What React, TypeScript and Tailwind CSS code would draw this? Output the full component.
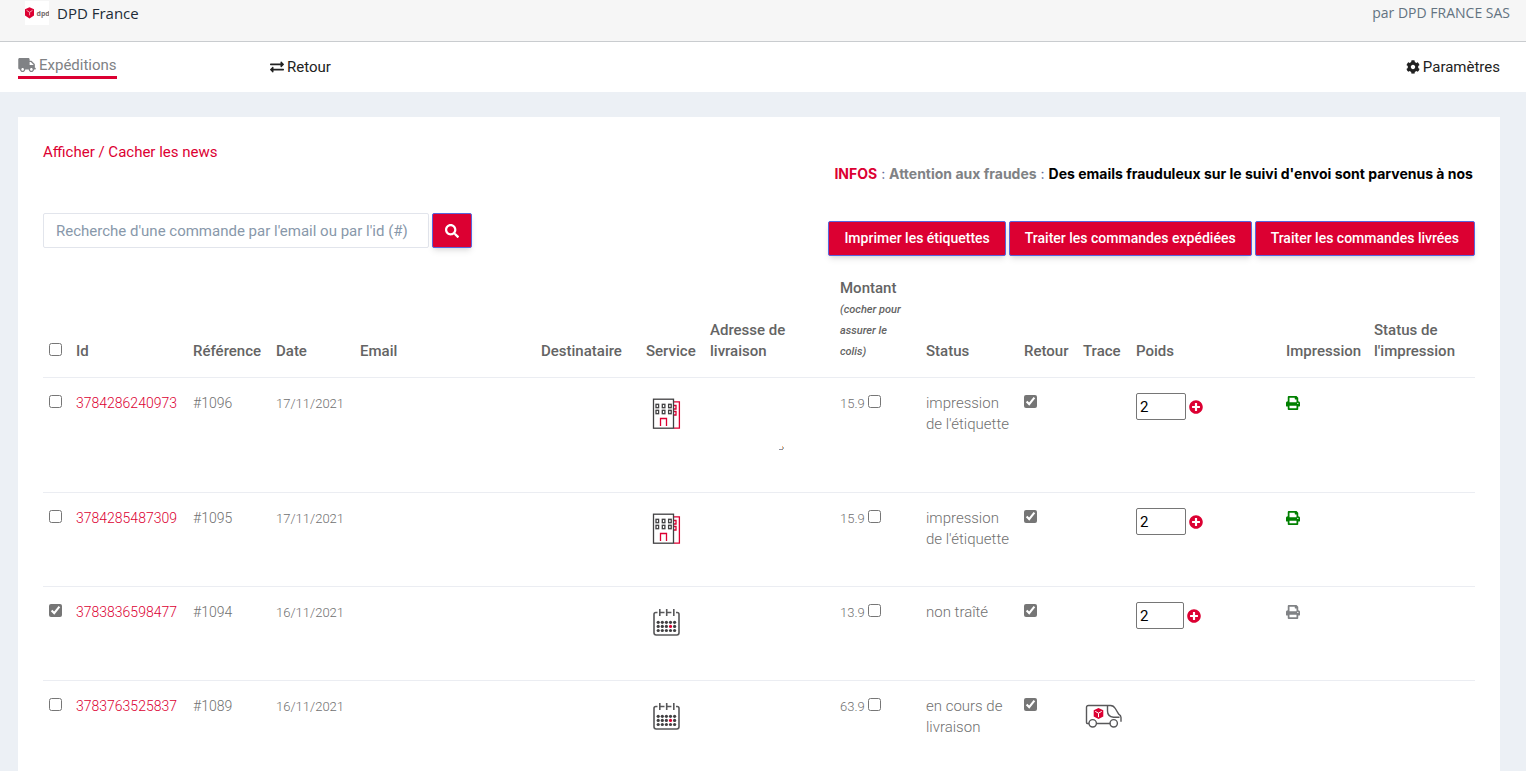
import React from "react";
import { FaCog, FaExchangeAlt, FaPlusCircle, FaPrint, FaSearch, FaTruck } from "react-icons/fa";

type Order = {
  id: string;
  reference: string;
  date: string;
  service: "relais" | "predict";
  amount: string;
  status: string;
  checked: boolean;
  trace: boolean;
  weight: string;
  print: "done" | "todo" | "none";
  height: string;
};

const orders: Order[] = [
  { id: "3784286240973", reference: "#1096", date: "17/11/2021", service: "relais", amount: "15.9", status: "impression de l'étiquette", checked: false, trace: false, weight: "2", print: "done", height: "h-[115px]" },
  { id: "3784285487309", reference: "#1095", date: "17/11/2021", service: "relais", amount: "15.9", status: "impression de l'étiquette", checked: false, trace: false, weight: "2", print: "done", height: "h-[94px]" },
  { id: "3783836598477", reference: "#1094", date: "16/11/2021", service: "predict", amount: "13.9", status: "non traîté", checked: true, trace: false, weight: "2", print: "todo", height: "h-[94px]" },
  { id: "3783763525837", reference: "#1089", date: "16/11/2021", service: "predict", amount: "63.9", status: "en cours de livraison", checked: false, trace: true, weight: "", print: "none", height: "h-[94px]" },
];

const actions = ["Imprimer les étiquettes", "Traiter les commandes expédiées", "Traiter les commandes livrées"];

const DpdLogo = () => (
  <svg width="24" height="24" viewBox="0 0 24 24" className="bg-white">
    <path d="M4.5 6.2 9 8.2v6.4l-4.5 2.8L0 14.6V8.2z" fill="#dc0032" />
    <path d="M1.5 9.3 4.6 11.3 7.5 9.3M4.6 11.3v3" fill="none" stroke="#f5b3c1" strokeWidth="0.9" />
    <text x="11.5" y="14.5" fontSize="7" fontWeight="bold" fill="#77706f" fontFamily="Open Sans, sans-serif">dpd</text>
  </svg>
);

const BuildingIcon = () => (
  <svg width="30" height="32" viewBox="0 0 30 32" fill="none" strokeWidth="1.3">
    <path d="M22 3.8h5.4v26.4H22M22 7.5h2v3.5h-2M22 13.5h2V17h-2" stroke="#dc0032" />
    <rect x="1.5" y="1.2" width="20" height="29" stroke="#414042" />
    <path d="M8.5 28v-7.5h6V28" stroke="#dc0032" />
    <g stroke="#414042">
      <rect x="4" y="6.3" width="2.6" height="3.4" />
      <rect x="10.3" y="6.3" width="2.6" height="3.4" />
      <rect x="16.6" y="6.3" width="2.6" height="3.4" />
      <rect x="4" y="12.3" width="2.6" height="3.4" />
      <rect x="10.3" y="12.3" width="2.6" height="3.4" />
      <rect x="16.6" y="12.3" width="2.6" height="3.4" />
    </g>
  </svg>
);

const CalendarIcon = () => (
  <svg width="30" height="32" viewBox="0 0 30 32">
    <path
      d="M5.5 5.5H3.8Q2 5.5 2 7.3v18.5Q2 28 4.2 28h20.6q2.2 0 2.2-2.2V7.3Q27 5.5 25.2 5.5H24M7.8 5.5h4.7M14.7 5.5h4.7M7.8 2v7M14.7 2v7M21.8 2v7"
      fill="none"
      stroke="#58585a"
      strokeWidth="1.6"
    />
    {[15.3, 19.4, 23.5].map((y) =>
      [6.2, 10.3, 14.4, 18.5, 22.6].map((x) => (
        <circle key={x + "-" + y} cx={x} cy={y} r="1.6" fill={x === 18.5 && y === 19.4 ? "#dc0032" : "#414042"} />
      ))
    )}
  </svg>
);

const VanIcon = () => (
  <svg width="38" height="24" viewBox="0 0 38 24" fill="none" stroke="#58585a" strokeWidth="1.4">
    <path d="M4 19.5H2.2Q1.5 19.5 1.5 18V3.5Q1.5 1.5 3.5 1.5h22q3 0 4.8 3l3.4 5.7q2.3 1.3 2.3 3.4v4.2M11.5 19.5h14" />
    <path d="M22.5 2v5q0 5.5 6 6.3h6" />
    <circle cx="7.7" cy="19.3" r="3.7" />
    <circle cx="28.7" cy="19.3" r="3.7" />
    <path d="M13.5 4 18.3 6.3v6.2l-4.8 2.6-4.8-2.6V6.3z" fill="#dc0032" stroke="none" />
    <path d="M10.3 7.4l3.2 1.8 3.2-1.8M13.5 9.2v4" stroke="#fff" strokeWidth="1" />
  </svg>
);

const TopBar = () => (
  <header className="flex h-[42px] items-start justify-between border-b border-[#c9cccf] bg-[#f6f6f6] pl-[25px] pr-4 font-['Open_Sans',sans-serif]">
    <div className="flex items-center gap-2 pt-px text-[15px] leading-6 text-[#212b36]">
      <DpdLogo />
      <span>DPD France</span>
    </div>
    <span className="pt-px text-[14px] leading-6 text-[#637381]">par DPD FRANCE SAS</span>
  </header>
);

const NavBar = () => (
  <nav className="flex h-[50px] items-start bg-white pl-[18px] pr-[26px] pt-[13px] text-[15px] leading-[21px] text-[#222]">
    <div className="w-[252px]">
      <a href="#expeditions" className="flex w-fit items-start gap-[3px] border-b-3 border-[#dc0032] text-[#808285]">
        <FaTruck className="mt-[3px] h-[14px] w-[18px]" />
        Expéditions
      </a>
    </div>
    <a href="#retour" className="flex items-start gap-[3px] pt-0.5">
      <FaExchangeAlt className="mt-[3px] size-[14px]" />
      Retour
    </a>
    <a href="#parametres" className="ml-auto flex items-start gap-[3px] pt-0.5">
      <FaCog className="mt-[3px] size-[14px]" />
      Paramètres
    </a>
  </nav>
);

const Toolbar = () => (
  <div className="flex items-start justify-between">
    <div>
      <a href="#news" className="block text-[#dc0032]">
        Afficher / Cacher les news
      </a>
      <form className="flex gap-[3px] pt-[50px]">
        <input
          type="text"
          aria-label="Recherche"
          placeholder="Recherche d'une commande par l'email ou par l'id (#)"
          className="h-[35px] w-[386px] rounded-xs border border-[#e2e5ec] px-3 placeholder:text-[#8898aa]"
        />
        <button
          type="button"
          aria-label="Rechercher"
          className="flex h-[35px] w-10 items-center justify-center rounded-xs border border-[#5867dd] bg-[#dc0032] text-white shadow-md"
        >
          <FaSearch className="size-[14px]" />
        </button>
      </form>
    </div>
    <div>
      <div className="w-0 min-w-full overflow-hidden pl-1.5 pt-[21px] font-[Inter,sans-serif] text-[14px] font-bold whitespace-nowrap text-[#646c9a]">
        <span className="text-[#dc0032]">INFOS</span>
        <span className="font-normal"> : </span>
        <span className="text-[#808285]">Attention aux fraudes</span>
        <span className="font-normal"> : </span>
        <span className="text-black">Des emails frauduleux sur le suivi d'envoi sont parvenus à nos</span>
      </div>
      <div className="flex gap-[3px] pt-[37px]">
        {actions.map((label) => (
          <button
            key={label}
            type="button"
            className="h-[35px] rounded-xs border border-[#5867dd] bg-[#dc0032] px-[15px] text-[14px] font-medium text-white shadow-md"
          >
            {label}
          </button>
        ))}
      </div>
    </div>
  </div>
);

const Check = ({ label, checked }: { label: string; checked?: boolean }) => (
  <input type="checkbox" aria-label={label} defaultChecked={checked} className="block size-[13px] accent-[#767676]" />
);

const OrderRow = ({ order }: { order: Order }) => (
  <tr className={`${order.height} border-t border-[#ebedf2] align-top *:px-1.5 *:pt-[15px]`}>
    <td>
      <div className="pt-0.5">
        <Check label={"Sélectionner " + order.id} checked={order.checked} />
      </div>
    </td>
    <td className="text-[14px]">
      <a href={"#" + order.id} className="text-[#dc0032]">
        {order.id}
      </a>
    </td>
    <td className="text-[14px]">{order.reference}</td>
    <td className="text-[13px]">{order.date}</td>
    <td></td>
    <td></td>
    <td>
      <div className="pl-1.5 pt-[5px]">{order.service === "relais" ? <BuildingIcon /> : <CalendarIcon />}</div>
    </td>
    <td>
      {order.id === "3784286240973" && (
        <svg width="5" height="5" viewBox="0 0 5 5" className="ml-[69px] mt-[53px]" fill="none">
          <path d="M3.5 0v3" stroke="#f2b98a" />
          <path d="M4.5 1v2" stroke="#8fb4d0" />
          <path d="M0 3.5h4" stroke="#8d8f9c" />
        </svg>
      )}
    </td>
    <td>
      <label className="flex gap-[3px] text-[13px]">
        {order.amount}
        <span className="pt-0.5">
          <Check label="Assurer le colis" />
        </span>
      </label>
    </td>
    <td>{order.status}</td>
    <td>
      <div className="pt-0.5">
        <Check label="Retour" checked />
      </div>
    </td>
    <td>
      {order.trace && (
        <div className="pl-0.5 pt-2">
          <VanIcon />
        </div>
      )}
    </td>
    <td>
      {order.weight && (
        <div className="flex items-center gap-[3px]">
          <input
            type="number"
            aria-label="Poids"
            defaultValue={order.weight}
            className={`${order.print === "todo" ? "w-12" : "w-[50px]"} h-[27px] rounded-xs border border-[#767676] px-[3px] font-normal text-black`}
          />
          <button type="button" aria-label="Ajouter" className="text-[#dc0032]">
            <FaPlusCircle className="size-[14px]" />
          </button>
        </div>
      )}
    </td>
    <td>
      {order.print !== "none" && (
        <FaPrint className={`mt-[3px] size-[14px] ${order.print === "done" ? "text-[#008000]" : "text-[#808285]"}`} />
      )}
    </td>
    <td></td>
  </tr>
);

const OrdersTable = () => (
  <table className="mt-[7px] w-full table-fixed text-left">
    <colgroup>
      <col className="w-[27px]" />
      <col className="w-[117px]" />
      <col className="w-[83px]" />
      <col className="w-[84px]" />
      <col className="w-[181px]" />
      <col className="w-[105px]" />
      <col className="w-[64px]" />
      <col className="w-[130px]" />
      <col className="w-[86px]" />
      <col className="w-[98px]" />
      <col className="w-[59px]" />
      <col className="w-[53px]" />
      <col className="w-[150px]" />
      <col className="w-[88px]" />
      <col className="w-[107px]" />
    </colgroup>
    <thead className="text-[#646464]">
      <tr className="align-bottom whitespace-nowrap *:px-1.5 *:py-[15px] *:font-medium">
        <th>
          <div className="pb-1.5">
            <Check label="Tout sélectionner" />
          </div>
        </th>
        <th>Id</th>
        <th>Référence</th>
        <th>Date</th>
        <th>Email</th>
        <th>Destinataire</th>
        <th>Service</th>
        <th>
          Adresse de
          <br />
          livraison
        </th>
        <th>
          Montant
          <span className="block text-[11px] leading-[21px] italic">
            (cocher pour
            <br />
            assurer le
            <br />
            colis)
          </span>
        </th>
        <th>Status</th>
        <th>Retour</th>
        <th>Trace</th>
        <th>Poids</th>
        <th>Impression</th>
        <th>
          Status de
          <br />
          l'impression
        </th>
      </tr>
    </thead>
    <tbody className="font-light text-[#707070]">
      {orders.map((order) => (
        <OrderRow key={order.id} order={order} />
      ))}
    </tbody>
  </table>
);

const App = () => {
  return (
    <div className="h-screen overflow-hidden bg-[#ecf0f5] font-[Roboto,sans-serif]">
      <TopBar />
      <NavBar />
      <main className="mr-[26px] ml-[18px] mt-[25px] bg-white p-[25px] text-[15px] leading-[21px]">
        <Toolbar />
        <OrdersTable />
      </main>
    </div>
  );
};

export default App;
